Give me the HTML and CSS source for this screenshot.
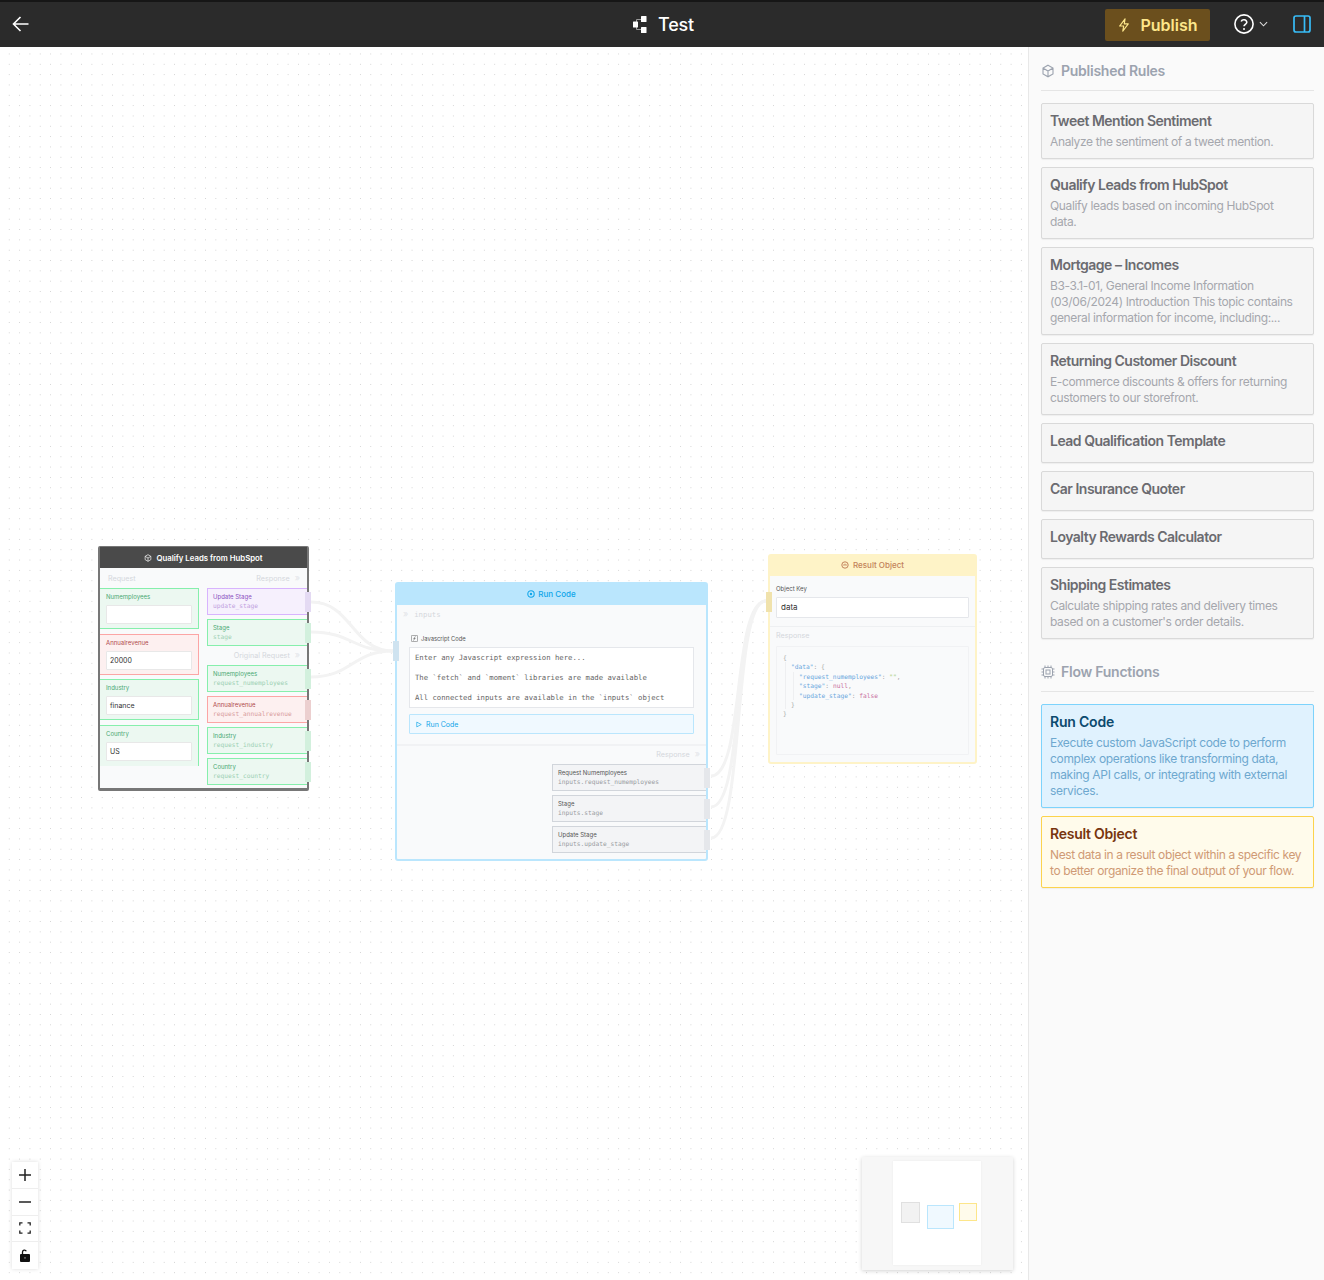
FILE: index.html
```html
<!DOCTYPE html>
<html lang="en">
<head>
<meta charset="utf-8">
<title>Test</title>
<link rel="stylesheet" href="styles.css">
</head>
<body>
<div class="app">
  <header class="topbar">
    <div class="topbar-left">
      <svg class="back" viewBox="0 0 18 18" width="18" height="18"><path d="M16.5 9H1.5M8.5 2 1.5 9l7 7" fill="none" stroke="#fff" stroke-width="1.6"/></svg>
    </div>
    <div class="topbar-title">
      <svg viewBox="0 0 15 17" width="15" height="17"><path d="M9 3.5H4.500V13.500H9" fill="none" stroke="#9a9a9a" stroke-width="1"/><rect x="9" y="0" width="5.500" height="6" rx=".6" fill="#fff"/><rect x="9" y="11" width="5.500" height="6" rx=".6" fill="#fff"/><rect x="1" y="5.500" width="5" height="6" rx=".6" fill="#fff"/></svg>
      <span>Test</span>
    </div>
    <div class="topbar-right">
      <button class="publish">
        <svg viewBox="0 0 16 16" width="14" height="16"><path d="M9.200 1 3 9.200h4.600L6.600 15l6.300-8.300H8.300z" fill="none" stroke="#fde68a" stroke-width="1.300" stroke-linejoin="round"/></svg>
        <span>Publish</span>
      </button>
      <div class="help">
        <svg viewBox="0 0 20 20" width="20" height="20"><circle cx="10" cy="10" r="9.100" fill="none" stroke="#fff" stroke-width="1.600"/><path d="M7.200 7.600a2.900 2.900 0 0 1 5.600.6c0 1.900-2.800 2.300-2.800 4" fill="none" stroke="#fff" stroke-width="1.600"/><circle cx="10" cy="14.900" r="1" fill="#fff"/></svg>
        <svg viewBox="0 0 10 6" width="9" height="6"><path d="M1 1l4 4 4-4" fill="none" stroke="#ddd" stroke-width="1.200"/></svg>
      </div>
      <svg class="panel-icon" viewBox="0 0 18 18" width="18" height="18"><rect x="1" y="1" width="16" height="16" rx="2" fill="none" stroke="#38bdf8" stroke-width="1.700"/><path d="M11.500 1v16" stroke="#38bdf8" stroke-width="1.700"/></svg>
    </div>
  </header>

  <div class="main">
    <section class="canvas">
      <svg class="edges" width="1028" height="1233" viewBox="0 0 1028 1233">
        <path d="M311 555C352 555 352 604 393 604"/>
        <path d="M311 585C352 585 352 604 393 604"/>
        <path d="M311 630C352 630 352 604 393 604"/>
        <path d="M711 729C745 729 732 554 766 554"/>
        <path d="M711 760C745 760 732 554 766 554"/>
        <path d="M711 791C745 791 732 554 766 554"/>
      </svg>

      <article class="node node-hub">
        <div class="node-head head-hub">
          <svg viewBox="0 0 12 12" width="8" height="8"><path d="M6 1l4.300 2.500v5L6 11 1.700 8.500v-5zM1.700 3.500 6 6l4.300-2.500M6 6v5" fill="none" stroke="#fff" stroke-width="1"/></svg>
          <span>Qualify Leads from HubSpot</span>
        </div>
        <div class="hub-body">
          <div class="hub-col">
            <div class="col-label">Request</div>
            <div class="hub-fields">
              <div class="field field-green"><div class="field-label">Numemployees</div><div class="field-input"></div></div>
              <div class="field field-red"><div class="field-label">Annualrevenue</div><div class="field-input">20000</div></div>
              <div class="field field-green"><div class="field-label">Industry</div><div class="field-input">finance</div></div>
              <div class="field field-green field-last"><div class="field-label">Country</div><div class="field-input">US</div></div>
            </div>
          </div>
          <div class="hub-col">
            <div class="col-label col-right">Response <span class="chev">»</span></div>
            <div class="hub-rows">
              <div class="out out-purple"><div class="out-title">Update Stage</div><div class="out-key">update_stage</div><i class="handle"></i></div>
              <div class="out out-green"><div class="out-title">Stage</div><div class="out-key">stage</div><i class="handle"></i></div>
              <div class="col-label col-right col-mid">Original Request <span class="chev">»</span></div>
              <div class="out out-green"><div class="out-title">Numemployees</div><div class="out-key">request_numemployees</div><i class="handle"></i></div>
              <div class="out out-red"><div class="out-title">Annualrevenue</div><div class="out-key">request_annualrevenue</div><i class="handle"></i></div>
              <div class="out out-green"><div class="out-title">Industry</div><div class="out-key">request_industry</div><i class="handle"></i></div>
              <div class="out out-green"><div class="out-title">Country</div><div class="out-key">request_country</div><i class="handle"></i></div>
            </div>
          </div>
        </div>
      </article>

      <article class="node node-code">
        <i class="in-handle handle-blue"></i>
        <div class="node-head head-code">
          <svg viewBox="0 0 12 12" width="8" height="8"><circle cx="6" cy="6" r="4.800" fill="none" stroke="#0ea5e9" stroke-width="1.600"/><circle cx="6" cy="6" r="1.800" fill="#0ea5e9"/></svg>
          <span>Run Code</span>
        </div>
        <div class="code-inputs"><span class="chev chev-left">»</span> <span class="mono-faint">inputs</span></div>
        <div class="code-main">
          <div class="js-label">
            <svg viewBox="0 0 10 10" width="7" height="7"><rect x=".5" y=".5" width="9" height="9" rx="1.500" fill="none" stroke="#555" stroke-width=".8"/><path d="M6.500 2.500C5 2.300 5 3.500 4.800 5S4.500 7.800 3.200 7.500M3.500 5h3" fill="none" stroke="#555" stroke-width=".8"/></svg>
            <span>Javascript Code</span>
          </div>
          <div class="js-area">
            <div>Enter any Javascript expression here...</div>
            <div>The `fetch` and `moment` libraries are made available</div>
            <div>All connected inputs are available in the `inputs` object</div>
          </div>
          <div class="run-btn">
            <svg viewBox="0 0 8 8" width="6" height="7"><path d="M1 .8 7 4 1 7.200z" fill="none" stroke="#0ea5e9" stroke-width=".9"/></svg>
            <span>Run Code</span>
          </div>
        </div>
        <div class="code-response">
          <div class="col-label col-right resp-label">Response <span class="chev">»</span></div>
          <div class="resp-rows">
            <div class="out out-grey"><div class="out-title">Request Numemployees</div><div class="out-key">inputs.request_numemployees</div><i class="handle"></i></div>
            <div class="out out-grey"><div class="out-title">Stage</div><div class="out-key">inputs.stage</div><i class="handle"></i></div>
            <div class="out out-grey"><div class="out-title">Update Stage</div><div class="out-key">inputs.update_stage</div><i class="handle"></i></div>
          </div>
        </div>
      </article>

      <article class="node node-result">
        <i class="in-handle handle-yellow"></i>
        <div class="node-head head-result">
          <svg viewBox="0 0 12 12" width="8" height="8"><circle cx="6" cy="6" r="4.800" fill="none" stroke="#c2825a" stroke-width="1.500"/><path d="M3 6h6M6 4v2" stroke="#c2825a" stroke-width="1.200"/></svg>
          <span>Result Object</span>
        </div>
        <div class="result-key">
          <div class="key-label">Object Key</div>
          <div class="key-input">data</div>
        </div>
        <div class="result-resp">
          <div class="col-label">Response</div>
          <div class="json">
            <div>{</div>
            <div class="jb">
              <div><span class="k">"data"</span>: {</div>
              <div class="jb">
                <div><span class="k">"request_numemployees"</span>: <span class="s">""</span>,</div>
                <div><span class="k">"stage"</span>: <span class="v">null</span>,</div>
                <div><span class="k">"update_stage"</span>: <span class="v">false</span></div>
              </div>
              <div>}</div>
            </div>
            <div>}</div>
          </div>
        </div>
      </article>

      <div class="controls">
        <button class="ctrl"><svg viewBox="0 0 14 14" width="14" height="14"><path d="M7 1v12M1 7h12" stroke="#222" stroke-width="1.500"/></svg></button>
        <button class="ctrl"><svg viewBox="0 0 14 14" width="14" height="14"><path d="M1 7h12" stroke="#222" stroke-width="1.500"/></svg></button>
        <button class="ctrl"><svg viewBox="0 0 12 12" width="12" height="12"><path d="M.8 3.500V.8h2.700M8.500.8h2.700v2.700M11.200 8.500v2.700H8.500M3.500 11.200H.8V8.500" fill="none" stroke="#222" stroke-width="1.300"/></svg></button>
        <button class="ctrl"><svg viewBox="0 0 12 13" width="12" height="13"><rect x="1" y="5" width="10" height="8" rx="1" fill="#111"/><path d="M3.500 5V3a2 2 0 0 1 3.800-.8" fill="none" stroke="#111" stroke-width="1.300"/><circle cx="6" cy="8.900" r=".8" fill="#888"/></svg></button>
      </div>

      <div class="minimap">
        <div class="mini-view">
          <i class="mini mini-grey"></i>
          <i class="mini mini-blue"></i>
          <i class="mini mini-yellow"></i>
        </div>
      </div>
    </section>

    <aside class="sidebar">
      <div class="side-title">
        <svg viewBox="0 0 14 14" width="14" height="14"><path d="M7 1.200l5 2.900v5.800l-5 2.900-5-2.900V4.100zM2 4.100 7 7l5-2.900M7 7v5.800" fill="none" stroke="#9ca3af" stroke-width="1.100"/></svg>
        <span>Published Rules</span>
      </div>
      <div class="cards">
        <div class="card"><h3>Tweet Mention Sentiment</h3><p>Analyze the sentiment of a tweet mention.</p></div>
        <div class="card"><h3>Qualify Leads from HubSpot</h3><p>Qualify leads based on incoming HubSpot data.</p></div>
        <div class="card"><h3>Mortgage – Incomes</h3><p>B3-3.1-01, General Income Information (03/06/2024) Introduction This topic contains general information for income, including:...</p></div>
        <div class="card"><h3>Returning Customer Discount</h3><p>E-commerce discounts &amp; offers for returning customers to our storefront.</p></div>
        <div class="card"><h3>Lead Qualification Template</h3></div>
        <div class="card"><h3>Car Insurance Quoter</h3></div>
        <div class="card"><h3>Loyalty Rewards Calculator</h3></div>
        <div class="card"><h3>Shipping Estimates</h3><p>Calculate shipping rates and delivery times based on a customer's order details.</p></div>
      </div>
      <div class="side-title side-title-second">
        <svg viewBox="0 0 14 14" width="14" height="14"><g fill="none" stroke="#9ca3af" stroke-width="1"><rect x="2.500" y="2.500" width="9" height="9" rx="1.500"/><rect x="5" y="5" width="4" height="4"/><path d="M4 .5v2M7 .5v2M10 .5v2M4 11.500v2M7 11.500v2M10 11.500v2M.5 4h2M.5 7h2M.5 10h2M11.500 4h2M11.500 7h2M11.500 10h2"/></g></svg>
        <span>Flow Functions</span>
      </div>
      <div class="cards">
        <div class="card card-blue"><h3>Run Code</h3><p>Execute custom JavaScript code to perform complex operations like transforming data, making API calls, or integrating with external services.</p></div>
        <div class="card card-yellow"><h3>Result Object</h3><p>Nest data in a result object within a specific key to better organize the final output of your flow.</p></div>
      </div>
    </aside>
  </div>
</div>
</body>
</html>
```
FILE: styles.css
```css
* { box-sizing: border-box; }
html, body { margin: 0; padding: 0; height: 1280px; overflow: hidden; }
body { font-family: Inter, "Liberation Sans", sans-serif; background: #fff; color: #222; }
button { font: inherit; border: 0; padding: 0; }

.app { display: flex; flex-direction: column; height: 1280px; }

/* top bar */
.topbar {
  height: 47px; flex: none; background: #2b2b2b; border-top: 2px solid #161616; padding-bottom: 1px;
  display: grid; grid-template-columns: 1fr auto 1fr; align-items: center;
}
.topbar-left { padding-left: 12px; display: flex; }
.topbar-title { display: flex; align-items: center; gap: 11px; padding-left: 2px; color: #fff; font-size: 18px; font-weight: 500; letter-spacing: -.2px; }
.topbar-right { display: flex; align-items: center; justify-content: flex-end; padding: 2px 13px 0 0; }
.publish {
  width: 105px; height: 32px; background: #6b4f1d; color: #fde68a; border-radius: 2px;
  display: flex; align-items: center; justify-content: center; gap: 9px; font-size: 16px; font-weight: 600;
}
.help { display: flex; align-items: center; gap: 5px; margin: -2px 0 0 24px; }
.panel-icon { margin: -2px 0 0 25px; }

/* main */
.main { flex: 1; display: flex; min-height: 0; }
.canvas {
  position: relative; width: 1028px; flex: none; overflow: hidden;
  background-color: #fff;
  background-image: radial-gradient(circle, #d2d2d2 .6px, transparent .9px);
  background-size: 10.33px 10.33px;
  background-position: 4.1px 1.8px;
}
.edges { position: absolute; left: 0; top: 0; }
.edges path { fill: none; stroke: #f3f3f3; stroke-width: 3; }

/* nodes */
.node { position: absolute; background: #f9fafb; display: flex; flex-direction: column; }
.node-head {
  display: flex; align-items: center; justify-content: center; gap: 3px;
  font-size: 8px; font-weight: 500; flex: none;
}
.chev { color: #e2e4e8; font-size: 9px; line-height: 0; margin-left: 3px; }
.chev-left { margin-left: 0; margin-right: 4px; }
.col-label { height: 16px; line-height: 14px; font-size: 7.2px; color: #d4d7dc; padding: 0 7px 0 8px; }
.col-right { text-align: right; }

/* hubspot node */
.node-hub {
  left: 98px; top: 499px; width: 211px; height: 245px; border: 2px solid #777;
  border-bottom-width: 3px; border-top-width: 1px; border-radius: 2px;
}
.head-hub { height: 21px; background: #4a4a4a; color: #fff; font-size: 7.8px; font-weight: 600; gap: 4px; }
.hub-body { display: grid; grid-template-columns: 99px 100px; column-gap: 8px; padding-top: 4px; }
.hub-fields { display: flex; flex-direction: column; gap: 4.6px; }
.field { height: 41px; border: 1px solid; border-left: 0; padding: 3px 6px 0; }
.field-label { height: 13px; line-height: 10px; font-size: 6px; }
.field-input {
  height: 19px; background: #fff; border: 1px solid #e8e8e8; border-radius: 1px;
  font-size: 7px; line-height: 17px; padding-left: 3px; color: #333;
}
.field-green { background: #ecf8f1; border-color: #86efac; color: #4aa873; }
.field-red { background: #fdf0f0; border-color: #fca5a5; color: #b04a4a; }
.field-last { border-bottom: 0; }
.hub-rows, .resp-rows { display: flex; flex-direction: column; gap: 4px; }
.col-mid { height: 11px; line-height: 11px; }
.out {
  position: relative; height: 27px; border: 1px solid; border-right: 0; padding: 3px 5px 0;
}
.out-title { font-size: 6px; line-height: 9px; }
.out-key { font-family: "DejaVu Sans Mono", monospace; font-size: 6.23px; line-height: 9px; }
.handle { position: absolute; right: -4px; top: 3px; width: 6px; height: 20px; }
.out-green { background: #ecf8f1; border-color: #86efac; color: #4aa873; }
.out-green .out-key { color: #9dd0b3; }
.out-green .handle { background: #d2f0dd; }
.out-purple { background: #f6f0fd; border-color: #d8b4fe; color: #8a4fc0; }
.out-purple .out-key { color: #bfa0de; }
.out-purple .handle { background: #e4daf3; }
.out-red { background: #fdf0f0; border-color: #fca5a5; color: #b04a4a; }
.out-red .out-key { color: #d89c9c; }
.out-red .handle { background: #eccfcf; }
.out-grey { background: #f3f4f6; border-color: #d1d5db; color: #555; }
.out-grey .out-key { color: #999ca1; }
.out-grey .handle { background: #e5e7eb; }

.in-handle { position: absolute; left: -4px; width: 6px; height: 20px; z-index: 1; }
.handle-blue { top: 57px; background: #cfe3f0; }
.handle-yellow { top: 36px; background: #f0e2ac; }

/* code node */
.node-code {
  left: 395px; top: 535px; width: 313px; height: 279px;
  border: 2px solid #bae6fd; border-radius: 3px;
}
.head-code { height: 21px; padding-bottom: 1px; background: #bae6fd; color: #0ea5e9; }
.code-inputs { height: 18px; padding-left: 6px; font-size: 7px; line-height: 19px; }
.mono-faint { font-family: "DejaVu Sans Mono", monospace; font-size: 7.3px; color: #d4d7dc; }
.code-main { padding: 10px 12px 10px; border-bottom: 2px solid #f1f2f4; height: 123px; }
.js-label { display: flex; align-items: center; gap: 3px; height: 11px; font-size: 5.8px; color: #555; padding-left: 2px; }
.js-area {
  height: 61px; margin-top: 3px; background: #fff; border: 1px solid #e5e7eb;
  padding: 4px 5px; font-family: "DejaVu Sans Mono", monospace; font-size: 7.28px; color: #666;
  display: flex; flex-direction: column; justify-content: space-between; line-height: 11px;
}
.run-btn {
  height: 20px; margin-top: 6px; background: #f0f9ff; border: 1px solid #bae6fd; border-radius: 1px;
  display: flex; align-items: center; gap: 4px; padding-left: 6px; font-size: 7px; color: #0ea5e9;
}
.code-response { flex: 1; display: flex; flex-direction: column; align-items: flex-end; }
.resp-label { width: 100%; height: 18px; line-height: 18px; padding-right: 6px; }
.resp-rows { width: 154px; }
.resp-rows .out { padding-left: 5px; }

/* result node */
.node-result {
  left: 768px; top: 507px; width: 209px; height: 210px;
  border: 2px solid #fef3c7; border-radius: 3px;
}
.head-result { height: 20px; padding-bottom: 2px; background: #fef3c7; color: #c2825a; gap: 4px; }
.result-key { height: 51px; padding: 9px 6px 0; border-bottom: 1px solid #eef0f2; }
.key-label { height: 12px; line-height: 7px; font-size: 6px; color: #555; }
.key-input {
  height: 21px; background: #fff; border: 1px solid #e5e7eb; border-radius: 1px;
  font-size: 8px; line-height: 19px; padding-left: 4px; color: #333;
}
.result-resp { flex: 1; padding-top: 4px; }
.result-resp .col-label { padding: 0 6px; height: 15px; line-height: 10px; font-size: 7.2px; }
.json {
  margin: 0 6px; height: 109px; border: 1px solid #f1f2f4; border-radius: 1px; padding: 6px 6px;
  font-family: "DejaVu Sans Mono", monospace; font-size: 6.26px; line-height: 9.4px; color: #a8a8a8;
}
.jb { margin-left: 1.5px; padding-left: 5.5px; border-left: 1px solid #eeeff1; }
.k { color: #6aa7dd; }
.s { color: #a3cf7a; }
.v { color: #c86fa0; }

/* controls */
.controls {
  position: absolute; left: 12px; bottom: 11px; width: 26px; display: flex; flex-direction: column;
  background: #fff; box-shadow: 0 0 4px rgba(0,0,0,.14);
}
.ctrl {
  height: 26.75px; display: flex; align-items: center; justify-content: center;
  background: #fff; border-bottom: 1px solid #eee;
}
.ctrl:last-child { border-bottom: 0; }

/* minimap */
.minimap {
  position: absolute; right: 15px; bottom: 10px; width: 151px; height: 113px;
  background: #f7f7f7; box-shadow: 0 1px 4px rgba(0,0,0,.18);
  padding-left: 31px; padding-top: 4px;
}
.mini-view { position: relative; width: 88px; height: 104px; background: #fff; box-shadow: 0 0 2px rgba(0,0,0,.06); }
.mini { position: absolute; border: 1px solid; }
.mini-grey { left: 8px; top: 41px; width: 19px; height: 21px; background: #f2f2f2; border-color: #e0e0e0; }
.mini-blue { left: 34px; top: 44px; width: 27px; height: 24px; background: #f0f9ff; border-color: #bae6fd; }
.mini-yellow { left: 66px; top: 42px; width: 18px; height: 18px; background: #fffbeb; border-color: #fde68a; }

/* sidebar */
.sidebar {
  flex: 1; background: #fafafa; border-left: 1px solid #e8e8e8;
  padding: 14px 10px 0 12px; min-width: 0;
}
.side-title {
  height: 30px; padding-bottom: 10px; margin-bottom: 12px; border-bottom: 1px solid #e5e5e5;
  display: flex; align-items: center; gap: 6px;
  font-size: 14px; font-weight: 600; color: #9ca3af; letter-spacing: -.25px;
}
.side-title-second { margin-top: 23px; }
.cards { display: flex; flex-direction: column; gap: 8px; }
.card {
  background: #f5f5f5; border: 1px solid #d9d9d9; border-radius: 2px; padding: 8px;
  box-shadow: 0 1px 1px rgba(0,0,0,.05);
}
.card h3 { margin: 0 0 4px; font-size: 14px; line-height: 18px; font-weight: 600; color: #6b6b70; letter-spacing: -.5px; }
.card p { margin: 0; padding-right: 6px; font-size: 12px; line-height: 16px; color: #a5a7ad; letter-spacing: -.37px; }
.card-blue { background: #e0f2fe; border-color: #7dd3fc; }
.card-blue h3 { color: #0c4a6e; letter-spacing: -.2px; }
.card-blue p { color: #6ea8cf; letter-spacing: -.32px; padding-right: 0; }
.card-yellow { background: #fffbeb; border-color: #fcd34d; }
.card-yellow h3 { color: #78350f; letter-spacing: -.25px; }
.card-yellow p { color: #cf9a75; letter-spacing: -.38px; padding-right: 0; }
```
